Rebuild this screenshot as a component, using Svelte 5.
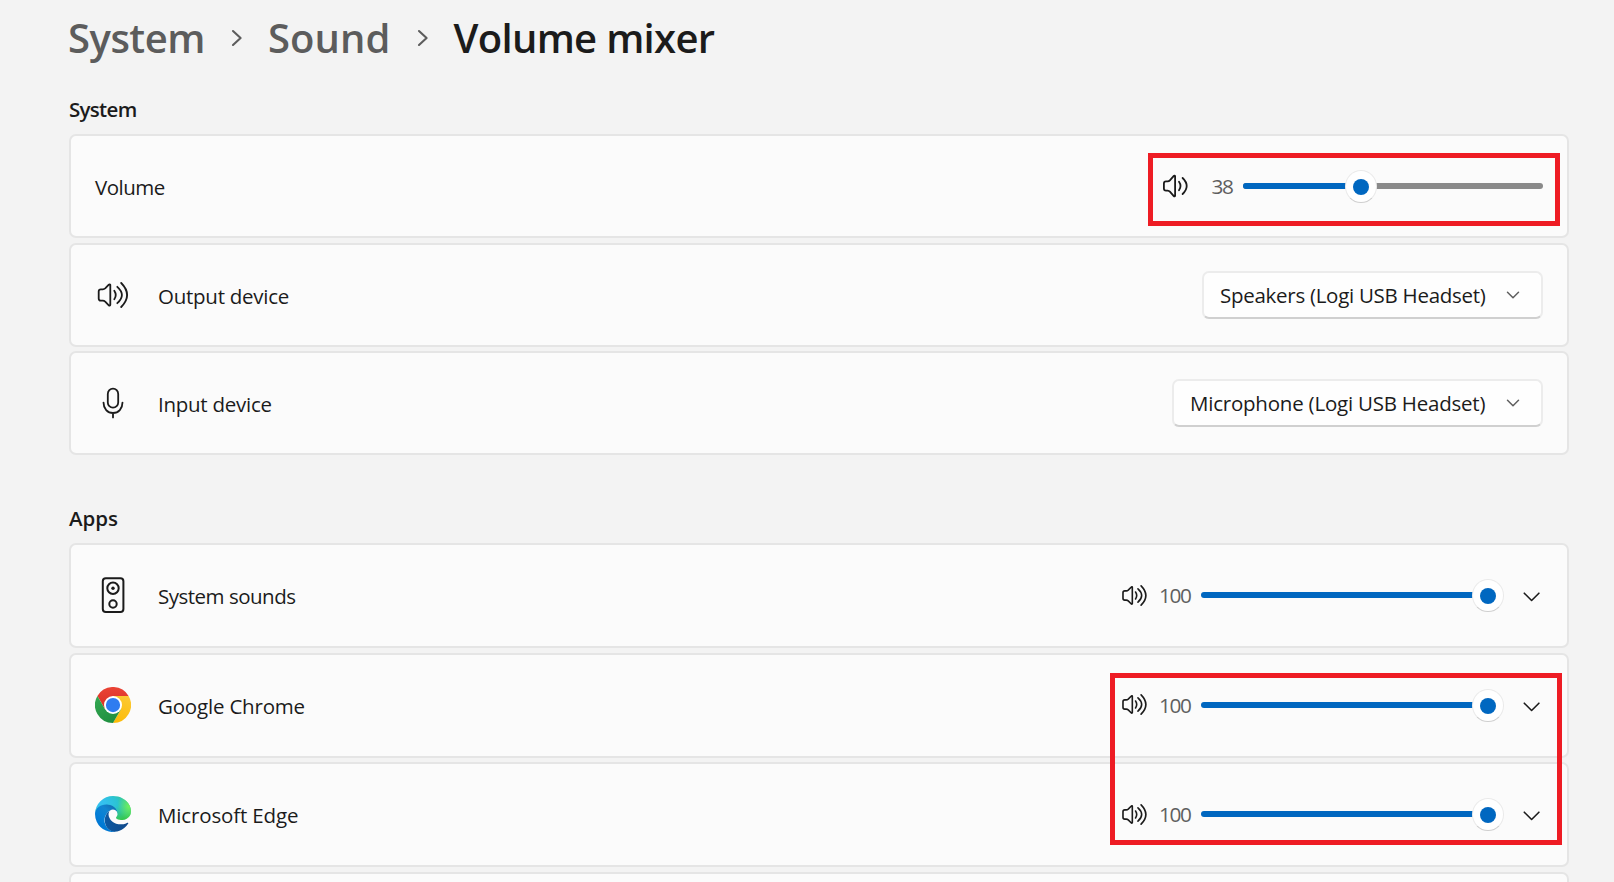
<script>
  const devices = [
    { icon: 'speaker', label: 'Output device', tracking: -0.26, value: 'Speakers (Logi USB Headset)', valueTracking: -0.28, width: 341 },
    { icon: 'mic', label: 'Input device', tracking: -0.26, value: 'Microphone (Logi USB Headset)', valueTracking: -0.22, width: 371 }
  ];

  const apps = [
    { icon: 'system', label: 'System sounds', tracking: -0.5, volume: 100 },
    { icon: 'chrome', label: 'Google Chrome', tracking: -0.19, volume: 100 },
    { icon: 'edge', label: 'Microsoft Edge', tracking: -0.15, volume: 100 }
  ];
</script>

{#snippet crumbArrow()}
  <svg class="crumb-arrow" viewBox="0 0 12 18" fill="none" stroke="#5c5c5c" stroke-width="2.1" stroke-linecap="round" stroke-linejoin="round">
    <path d="M2 2 9.6 9 2 16" />
  </svg>
{/snippet}

{#snippet loudIcon(size)}
  <svg width={size} height={size} viewBox="0 0 36 36" fill="none" stroke="#1b1b1b" stroke-width={size < 36 ? 2 : 1.8} stroke-linecap="round" stroke-linejoin="round">
    <path d="M15.3 8.2v19.6c0 .9-.9 1.1-1.5.5l-3.6-3.7a4 4 0 0 0-2.4-.9H5.9a2.2 2.2 0 0 1-2.2-2.2v-7a2.2 2.2 0 0 1 2.2-2.2h1.9a4 4 0 0 0 2.4-.9l3.6-3.7c.6-.6 1.5-.4 1.5.1Z" />
    <path d="M19.3 13.7q2.9 4.3 0 8.6" />
    <path d="M22.3 9.8q9.2 8.2 0 16.4" />
    <path d="M26.2 6q11.8 12 0 24" />
  </svg>
{/snippet}

{#snippet slider(volume)}
  <div class="slider">
    <div class="fill" style="width: calc(15.5px + (100% - 31px) * {volume / 100})"></div>
    <div class="thumb" style="left: calc((100% - 31px) * {volume / 100})"></div>
  </div>
{/snippet}

<main>
  <h1>
    <span class="crumb first">System</span>
    {@render crumbArrow()}
    <span class="crumb second">Sound</span>
    {@render crumbArrow()}
    <span class="current">Volume mixer</span>
  </h1>

  <section>
    <h2 class="system">System</h2>
    <div class="cards">
      <div class="card">
        <span class="label" style="letter-spacing: -0.5px">Volume</span>
        <div class="level master">
          <svg width="28" height="24" viewBox="0 0 28 24" fill="none" stroke="#1b1b1b" stroke-width="1.8" stroke-linecap="round" stroke-linejoin="round">
            <path d="M13.1 2.2v19.6c0 .6-.8.8-1.3.3l-3.9-4.4a3.2 3.2 0 0 0-2.3-1.1H4a2.1 2.1 0 0 1-2.1-2.1v-5A2.1 2.1 0 0 1 4 7.4h1.6a3.2 3.2 0 0 0 2.3-1.1l3.9-4.4c.5-.5 1.3-.3 1.3.3Z" />
            <path d="M17 7.8q3 4.2 0 8.4" />
            <path d="M20.6 4q8.2 8 0 16" />
          </svg>
          <span class="number">38</span>
          {@render slider(38)}
        </div>
      </div>

      {#each devices as device}
        <div class="card">
          {#if device.icon === 'speaker'}
            {@render loudIcon(36)}
          {:else}
            <svg width="36" height="36" viewBox="0 0 36 36" fill="none" stroke="#1b1b1b" stroke-width="1.8" stroke-linecap="round">
              <rect x="12.8" y="3.7" width="10.4" height="18.9" rx="5.2" />
              <path d="M8.5 17.6c0 6 4 10.4 9.5 10.4s9.5-4.4 9.5-10.4M18 28v4.4" />
            </svg>
          {/if}
          <span class="label" style="letter-spacing: {device.tracking}px">{device.label}</span>
          <button class="select" style="width: {device.width}px">
            <span style="letter-spacing: {device.valueTracking}px">{device.value}</span>
            <svg width="14" height="8" viewBox="0 0 14 8" fill="none" stroke="#5f5f5f" stroke-width="1.5" stroke-linecap="round" stroke-linejoin="round">
              <path d="M1.5 1.2 7 6.7l5.5-5.5" />
            </svg>
          </button>
        </div>
      {/each}
    </div>
  </section>

  <section class="apps">
    <h2>Apps</h2>
    <div class="cards">
      {#each apps as app}
        <div class="card">
          {#if app.icon === 'system'}
            <svg width="36" height="36" viewBox="0 0 36 36" fill="none" stroke="#1b1b1b" stroke-width="2">
              <rect x="7.8" y="1.2" width="20.6" height="33.8" rx="3" />
              <circle cx="18" cy="11.3" r="5.7" />
              <circle cx="18" cy="27" r="3.7" />
              <circle cx="18" cy="11.3" r="1.7" fill="#1b1b1b" stroke="none" />
            </svg>
          {:else if app.icon === 'chrome'}
            <svg width="36" height="36" viewBox="0 0 48 48">
              <defs>
                <linearGradient id="chrome-red" x1="24" y1="0" x2="24" y2="28" gradientUnits="userSpaceOnUse">
                  <stop offset="0" stop-color="#ea4335" /><stop offset="1" stop-color="#d93025" />
                </linearGradient>
                <linearGradient id="chrome-yellow" x1="20.7" y1="47.7" x2="41.5" y2="11.6" gradientUnits="userSpaceOnUse">
                  <stop offset="0" stop-color="#fcb900" /><stop offset="1" stop-color="#fcc934" />
                </linearGradient>
                <linearGradient id="chrome-green" x1="26.6" y1="46.5" x2="5.8" y2="10.4" gradientUnits="userSpaceOnUse">
                  <stop offset="0" stop-color="#1e8e3e" /><stop offset="1" stop-color="#34a853" />
                </linearGradient>
              </defs>
              <path fill="url(#chrome-red)" d="M3.2 12A24 24 0 0 1 44.8 12L24 12 13.6 30Z" />
              <path fill="url(#chrome-yellow)" d="M44.8 12A24 24 0 0 1 24 48L34.4 30 24 12Z" />
              <path fill="url(#chrome-green)" d="M24 48A24 24 0 0 1 3.2 12L13.6 30 34.4 30Z" />
              <circle cx="24" cy="24" r="12" fill="#fff" />
              <circle cx="24" cy="24" r="9.5" fill="#2f7cf0" />
            </svg>
          {:else}
            <svg width="36" height="36" viewBox="0 0 256 256">
              <defs>
                <linearGradient id="edge-navy" x1="58.7" y1="172.5" x2="232.8" y2="172.5" gradientUnits="userSpaceOnUse">
                  <stop offset="0" stop-color="#0c59a4" /><stop offset="1" stop-color="#114a8b" />
                </linearGradient>
                <linearGradient id="edge-blue" x1="148.1" y1="95" x2="41.3" y2="211.4" gradientUnits="userSpaceOnUse">
                  <stop offset="0" stop-color="#1272b8" /><stop offset=".3" stop-color="#1285d0" />
                  <stop offset=".67" stop-color="#0680d7" /><stop offset="1" stop-color="#0078d4" />
                </linearGradient>
                <radialGradient id="edge-green" cx="0" cy="0" r="202.4" gradientTransform="matrix(-.04 1 2.13 .08 25.8 47.3)" gradientUnits="userSpaceOnUse">
                  <stop offset="0" stop-color="#35c1f1" /><stop offset=".11" stop-color="#34c1ed" />
                  <stop offset=".23" stop-color="#2fc2df" /><stop offset=".31" stop-color="#2bc3d2" />
                  <stop offset=".67" stop-color="#36c752" />
                </radialGradient>
                <radialGradient id="edge-lime" cx="0" cy="0" r="97.3" gradientTransform="matrix(.28 .96 -.78 .23 240 75)" gradientUnits="userSpaceOnUse">
                  <stop offset="0" stop-color="#70f05e" /><stop offset="1" stop-color="#66eb6e" stop-opacity="0" />
                </radialGradient>
              </defs>
              <path fill="url(#edge-blue)" d="M105.7 241.4a79.2 79.2 0 0 1-22.7-21.3 80.7 80.7 0 0 1 29.5-120c3.1-1.5 8.5-4.1 15.5-4a32.4 32.4 0 0 1 25.7 13 31.9 31.9 0 0 1 6.4 18.7c0-.2 24.5-79.6-80-79.6-43.9 0-80 41.7-80 78.2a130.2 130.2 0 0 0 12.1 56 128 128 0 0 0 156.4 67.1 75.6 75.6 0 0 1-62.8-8Z" />
              <path fill="url(#edge-navy)" d="M231.1 190.5a93.7 93.7 0 0 1-10.6 4.7 101.9 101.9 0 0 1-35.9 6.5c-47.3 0-88.5-32.6-88.5-74.3a31.5 31.5 0 0 1 16.4-27.3c-29 14-42.8 46.4-42.8 72.5 0 54 39 81.4 71.8 81.4 7.9 0 19.8-2.3 27-4.6l1.3-.4a128.3 128.3 0 0 0 66.6-52.8 4 4 0 0 0-5.3-5.7Z" />
              {#each ['edge-green', 'edge-lime'] as paint}
                <path fill="url(#{paint})" d="M152.3 148.9c-.8 1-3.3 2.5-3.3 5.6 0 2.6 1.7 5.1 4.7 7.2 14.4 10 41.5 8.7 41.6 8.7a59.6 59.6 0 0 0 30.3-8.3 61.4 61.4 0 0 0 30.4-52.9c.3-22.4-8-37.3-11.3-43.9C223.5 23.8 177.7 0 128 0A128 128 0 0 0 0 126.2c.5-36.5 36.8-66 80-66 3.5 0 23.5.3 42 10 16.3 8.6 24.9 19 30.9 29.3 6.1 10.6 7.2 24.1 7.2 29.5s-2.7 13.3-7.8 19.9Z" />
              {/each}
            </svg>
          {/if}
          <span class="label" style="letter-spacing: {app.tracking}px">{app.label}</span>
          <div class="level">
            {@render loudIcon(29)}
            <span class="number">{app.volume}</span>
            {@render slider(app.volume)}
            <svg class="expand" width="24" height="12" viewBox="0 0 24 12" fill="none" stroke="#1b1b1b" stroke-width="1.6" stroke-linecap="round" stroke-linejoin="round">
              <path d="M5.3 2.2l7.3 7.3 7.3-7.3" />
            </svg>
          </div>
        </div>
      {/each}
      <div class="card"></div>
    </div>
  </section>

  <div class="mark mark-master"></div>
  <div class="mark mark-apps"></div>
</main>

<style>
  :global(body) {
    background: #f3f3f3;
    overflow: hidden;
  }

  main {
    position: relative;
    box-sizing: border-box;
    height: 882px;
    overflow: hidden;
    padding: 0 45px 0 69px;
    font-family: "Open Sans", "Noto Sans", sans-serif;
    font-size: 20.5px;
    line-height: 28px;
    color: #1b1b1b;
  }

  svg {
    display: block;
    flex: none;
  }

  h1 {
    display: flex;
    align-items: center;
    height: 75px;
    margin: 0 0 20px -1px;
    font-size: 40px;
    line-height: 76px;
    font-weight: 570;
    white-space: nowrap;
  }

  .crumb {
    color: #5c5c5c;
  }

  .first {
    letter-spacing: -0.5px;
  }

  .second {
    letter-spacing: 0.1px;
  }

  .current {
    letter-spacing: -0.7px;
  }

  .crumb-arrow {
    width: 12px;
    height: 18px;
    margin: 1px 25px 0 26px;
  }

  h2 {
    margin: 0 0 11px;
    font-size: 20.5px;
    line-height: 28px;
    font-weight: 600;
  }

  h2.system {
    letter-spacing: -0.7px;
  }

  .apps {
    margin-top: 49px;
  }

  .cards {
    display: flex;
    flex-direction: column;
    gap: 4.5px;
  }

  .apps .cards {
    gap: 4.6px;
  }

  .card {
    box-sizing: border-box;
    display: flex;
    flex: none;
    align-items: center;
    height: 104px;
    padding: 0 24px;
    border: 2px solid #e5e5e5;
    border-radius: 7px;
    background: #fbfbfb;
  }

  .apps .card {
    height: 105px;
    padding-bottom: 1px;
  }

  .label {
    padding-top: 2px;
    white-space: nowrap;
  }

  svg + .label {
    margin-left: 27px;
  }

  .select {
    box-sizing: border-box;
    display: flex;
    align-items: center;
    justify-content: space-between;
    height: 48px;
    margin-left: auto;
    padding: 0 21px 0 16px;
    border: 2px solid #ececec;
    border-bottom-color: #d0d0d0;
    border-radius: 7px;
    background: #fefefe;
    font: inherit;
    color: inherit;
    white-space: nowrap;
  }

  .level {
    display: flex;
    align-items: center;
    margin-left: auto;
  }

  .number {
    width: 42.5px;
    margin-right: 10.5px;
    font-size: 20.8px;
    line-height: 28px;
    letter-spacing: -1.4px;
    text-align: right;
    color: #5f5f5f;
  }

  .apps .number {
    width: 42px;
  }

  .slider {
    position: relative;
    width: 302px;
    height: 6px;
    border-radius: 3px;
    background: #8a8a8a;
  }

  .master .slider {
    width: 300px;
  }

  .fill {
    height: 6px;
    border-radius: 3px;
    background: #0067c0;
  }

  .apps .slider {
    background: none;
  }

  .thumb {
    position: absolute;
    top: -13px;
    box-sizing: border-box;
    display: flex;
    align-items: center;
    justify-content: center;
    width: 32px;
    height: 33px;
    border: 1.5px solid #eaeaea;
    border-bottom-color: #cfcfcf;
    border-radius: 50%;
    background: #fff;
  }

  .thumb::after {
    content: "";
    width: 16px;
    height: 16px;
    margin-top: 1px;
    border-radius: 50%;
    background: #0067c0;
  }

  .expand {
    margin: 4px 0 0 16px;
  }

  .mark {
    position: absolute;
    box-sizing: border-box;
    border: 5px solid #ee1c24;
    pointer-events: none;
  }

  .mark-master {
    left: 1148px;
    top: 153px;
    width: 412px;
    height: 73px;
  }

  .mark-apps {
    left: 1110px;
    top: 673px;
    width: 452px;
    height: 172px;
  }
</style>
